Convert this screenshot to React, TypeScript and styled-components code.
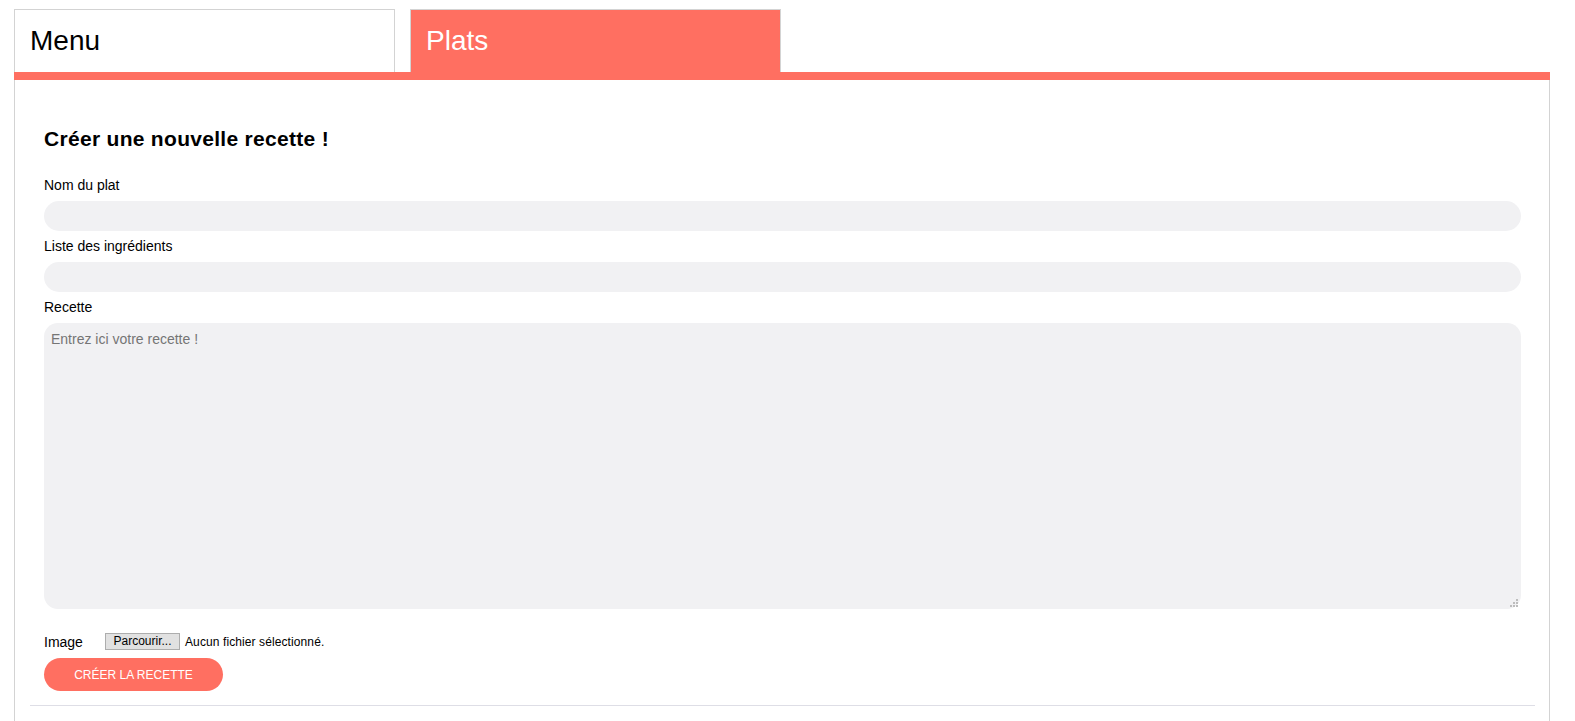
import React from "react";
import styled, { createGlobalStyle } from "styled-components";

const CORAL = "#ff6f61";
const BORDER = "#d3d3d3";
const FIELD_BG = "#f1f1f3";

const GlobalStyle = createGlobalStyle`
  html, body {
    margin: 0;
    padding: 0;
    background: #ffffff;
  }
  body {
    font-family: "Liberation Sans", Arial, sans-serif;
    color: #000000;
    overflow: hidden;
  }
  * { box-sizing: border-box; }
`;

const Page = styled.div`
  padding: 9px 25px 0 14px;
`;

const TabBar = styled.nav`
  display: flex;
  gap: 15px;
  height: 63px;
`;

const Tab = styled.div<{ $active?: boolean; $width: number }>`
  width: ${(p) => p.$width}px;
  height: 63px;
  display: flex;
  align-items: center;
  padding-left: 15px;
  border: 1px solid ${BORDER};
  border-bottom: none;
  background: ${(p) => (p.$active ? CORAL : "#ffffff")};
  color: ${(p) => (p.$active ? "#ffffff" : "#000000")};
  font-size: 28px;
  line-height: normal;
  cursor: pointer;
`;

const Bar = styled.div`
  height: 8px;
  background: ${CORAL};
`;

const Panel = styled.section`
  border-left: 1px solid ${BORDER};
  border-right: 1px solid ${BORDER};
  padding: 47px 28px 40px 29px;
`;

const Heading = styled.h2`
  margin: 0 0 26px;
  font-size: 21px;
  font-weight: bold;
  line-height: 24px;
  letter-spacing: 0.3px;
`;

const Label = styled.label`
  display: block;
  font-size: 14px;
  line-height: 16px;
  margin-bottom: 8px;
`;

const TextInput = styled.input`
  display: block;
  width: 100%;
  height: 30px;
  border: none;
  border-radius: 15px;
  background: ${FIELD_BG};
  padding: 0 12px;
  font-family: inherit;
  font-size: 14px;
  margin-bottom: 7px;
  outline: none;
`;

const AreaWrap = styled.div`
  position: relative;
  margin-bottom: 24px;
`;

const TextArea = styled.textarea`
  display: block;
  width: 100%;
  height: 286px;
  border: none;
  border-radius: 14px;
  background: ${FIELD_BG};
  padding: 8px 7px;
  font-family: "Liberation Sans", Arial, sans-serif;
  font-size: 14px;
  line-height: 16px;
  resize: none;
  outline: none;
  &::placeholder {
    color: #757575;
    opacity: 1;
  }
`;

const Grip = styled.svg`
  position: absolute;
  right: 3px;
  bottom: 2px;
  pointer-events: none;
`;

const FileRow = styled.div`
  display: flex;
  align-items: center;
  height: 17px;
  margin-bottom: 8px;
`;

const FileLabel = styled.span`
  width: 61px;
  font-size: 14px;
`;

const BrowseButton = styled.button`
  width: 75px;
  height: 17px;
  padding: 0;
  border: 1px solid #adadad;
  background: #e1e1e1;
  font-family: "Liberation Sans", Arial, sans-serif;
  font-size: 12px;
  line-height: 15px;
  color: #000000;
  cursor: pointer;
`;

const FileStatus = styled.span`
  margin-left: 5px;
  font-size: 12px;
  letter-spacing: 0.1px;
`;

const SubmitButton = styled.button`
  display: block;
  width: 179px;
  height: 33px;
  border: none;
  border-radius: 17px;
  background: ${CORAL};
  color: #ffffff;
  font-family: "Liberation Sans", Arial, sans-serif;
  font-size: 12px;
  text-transform: uppercase;
  cursor: pointer;
  margin-bottom: 14px;
`;

const Divider = styled.hr`
  margin: 0 -14px;
  border: none;
  height: 1px;
  background: #dedee6;
`;

const dots: Array<[number, number]> = [
  [6, 0],
  [3, 3],
  [6, 3],
  [0, 6],
  [3, 6],
  [6, 6],
];

export default function App() {
  return (
    <>
      <GlobalStyle />
      <Page>
        <TabBar>
          <Tab $width={381}>Menu</Tab>
          <Tab $width={371} $active>
            Plats
          </Tab>
        </TabBar>
        <Bar />
        <Panel>
          <Heading>Créer une nouvelle recette !</Heading>
          <form onSubmit={(e) => e.preventDefault()}>
            <Label htmlFor="nom">Nom du plat</Label>
            <TextInput id="nom" type="text" />
            <Label htmlFor="ingredients">Liste des ingrédients</Label>
            <TextInput id="ingredients" type="text" />
            <Label htmlFor="recette">Recette</Label>
            <AreaWrap>
              <TextArea id="recette" placeholder="Entrez ici votre recette !" />
              <Grip width="8" height="8" viewBox="0 0 8 8">
                {dots.map(([x, y]) => (
                  <rect key={`${x}-${y}`} x={x} y={y} width="2" height="2" fill="#bdbdbd" />
                ))}
              </Grip>
            </AreaWrap>
            <FileRow>
              <FileLabel>Image</FileLabel>
              <BrowseButton type="button">Parcourir...</BrowseButton>
              <FileStatus>Aucun fichier sélectionné.</FileStatus>
            </FileRow>
            <SubmitButton type="submit">Créer la recette</SubmitButton>
          </form>
          <Divider />
        </Panel>
      </Page>
    </>
  );
}
